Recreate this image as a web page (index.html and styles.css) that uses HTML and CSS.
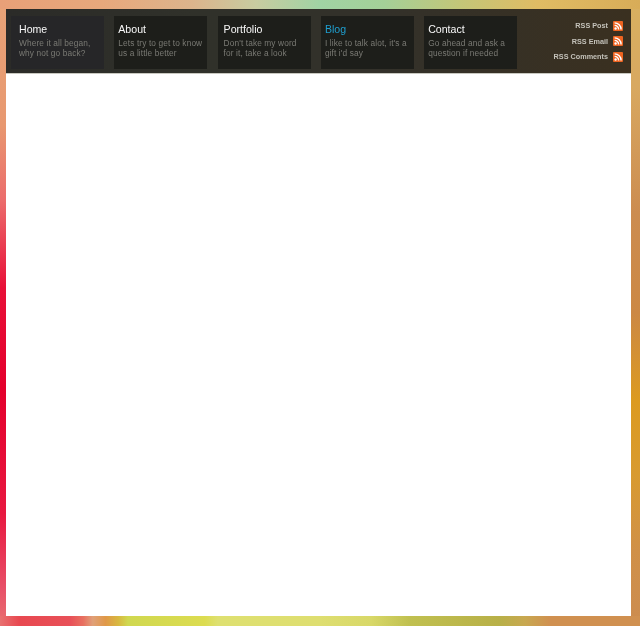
FILE: index.html
```html
<!DOCTYPE html>
<html>
<head>
	<title>Blog</title>
	<meta name="viewport" content="width=device-width, initial-scale=1">

	<link rel="stylesheet" href="styles.css">
</head>
<body>
	<div class="container">
		<div class="top-bar">
			<ul class="nav">
				<li class="nav-item nav-home">
					<a class="nav-title" href="#">Home</a>
					<p>Where it all began,<br>why not go back?</p>
				</li>
				<li class="nav-item">
					<a class="nav-title" href="#">About</a>
					<p>Lets try to get to know<br>us a little better</p>
				</li>
				<li class="nav-item nav-wide">
					<a class="nav-title" href="#">Portfolio</a>
					<p>Don't take my word<br>for it, take a look</p>
				</li>
				<li class="nav-item">
					<a class="nav-title active" href="#">Blog</a>
					<p>I like to talk alot, it's a<br>gift i'd say</p>
				</li>
				<li class="nav-item">
					<a class="nav-title" href="#">Contact</a>
					<p>Go ahead and ask a<br>question if needed</p>
				</li>
			</ul>

			<ul class="rss">
				<li>
					<a href="#">RSS Post</a>
					<svg class="rss-icon" viewBox="0 0 10 10"><rect width="10" height="10" rx="1" fill="#ee6420"/><circle cx="2.6" cy="7.5" r="1.2" fill="#fff"/><path d="M1.6 4.4a4 4 0 0 1 4 4M1.6 1.9a6.5 6.5 0 0 1 6.5 6.5" fill="none" stroke="#fff" stroke-width="1.4"/></svg>
				</li>
				<li>
					<a href="#">RSS Email</a>
					<svg class="rss-icon" viewBox="0 0 10 10"><rect width="10" height="10" rx="1" fill="#ee6420"/><circle cx="2.6" cy="7.5" r="1.2" fill="#fff"/><path d="M1.6 4.4a4 4 0 0 1 4 4M1.6 1.9a6.5 6.5 0 0 1 6.5 6.5" fill="none" stroke="#fff" stroke-width="1.4"/></svg>
				</li>
				<li>
					<a href="#">RSS Comments</a>
					<svg class="rss-icon" viewBox="0 0 10 10"><rect width="10" height="10" rx="1" fill="#ee6420"/><circle cx="2.6" cy="7.5" r="1.2" fill="#fff"/><path d="M1.6 4.4a4 4 0 0 1 4 4M1.6 1.9a6.5 6.5 0 0 1 6.5 6.5" fill="none" stroke="#fff" stroke-width="1.4"/></svg>
				</li>
			</ul>
		</div>

		<div class="content"></div>
	</div> <!-- .container -->
</body>
</html>
```

FILE: styles.css
```css
html, body {
	height: 100%;
}

body {
	margin: 0;
	font-family: "Liberation Sans", Arial, sans-serif;
	background-color: #e0a060;
	background-repeat: no-repeat;
	background-image:
		linear-gradient(90deg, #e8a078 0%, #e8a87c 16%, #dcb48c 30%, #c8cca0 40%, #a0d4a4 50%, #a4d098 60%, #c4c678 72%, #e0bc64 84%, #d8ac58 100%),
		linear-gradient(90deg, #e87070 0%, #e84850 3%, #e85058 11%, #e87060 13%, #e0a078 14.5%, #e09848 16.5%, #d8b840 18.5%, #d0d850 20%, #dcdc50 32%, #dee070 34%, #dede70 50%, #d8d868 58%, #c0c050 64%, #b8b048 78%, #c8a850 82%, #d09050 86%, #d09050 100%),
		linear-gradient(180deg, #e8a478 0%, #e89870 20%, #ec6c6c 32%, #e81038 46%, #e4002c 62%, #e81840 82%, #e85068 94%, #e87070 100%),
		linear-gradient(180deg, #d8b060 0%, #d8a860 14%, #cc8c50 34%, #cc8844 50%, #dc9a20 64%, #d89a30 76%, #d09048 88%, #cc8c50 100%);
	background-size: 100% 9px, 100% 10px, 6px 100%, 9px 100%;
	background-position: top left, bottom left, top left, top right;
}

.container {
	box-sizing: border-box;
	height: 100%;
	padding: 9px 9px 10px 6px;
	display: flex;
	flex-direction: column;
}

.top-bar {
	height: 65px;
	box-sizing: border-box;
	padding: 7px 8px 4px 5px;
	display: flex;
	justify-content: space-between;
	background: linear-gradient(90deg, #2b2b28 0%, #30312a 30%, #33312a 60%, #3a3020 100%);
	border-bottom: 1px solid #c8c8c0;
	filter: blur(0.4px);
}

.nav, .rss {
	list-style: none;
	margin: 0;
	padding: 0;
}

.nav {
	display: flex;
	gap: 10.3px;
}

.nav-item {
	width: 93px;
	height: 53px;
	box-sizing: border-box;
	padding: 7px 0 0 4px;
	background-color: #1d1e1a;
}

.nav-home {
	padding-left: 8px;
	background-color: #262628;
}

.nav-wide {
	padding-left: 6px;
}

.nav-title {
	display: block;
	font-size: 10.6px;
	line-height: 13px;
	color: #f8f8f8;
	text-decoration: none;
}

.nav-title.active {
	color: #1f9fcf;
}

.nav-item p {
	margin: 2px 0 0 0;
	font-size: 8.3px;
	line-height: 10.3px;
	letter-spacing: 0.12px;
	white-space: nowrap;
	color: #7a7a74;
}

.rss {
	padding-top: 2px;
}

.rss li {
	display: flex;
	justify-content: flex-end;
	align-items: center;
	height: 15.5px;
	gap: 5px;
}

.rss a {
	font-size: 7.25px;
	font-weight: bold;
	color: #c4c2ba;
	text-decoration: none;
}

.rss-icon {
	width: 10px;
	height: 10px;
}

.content {
	flex: 1;
	background-color: #fff;
}
```
